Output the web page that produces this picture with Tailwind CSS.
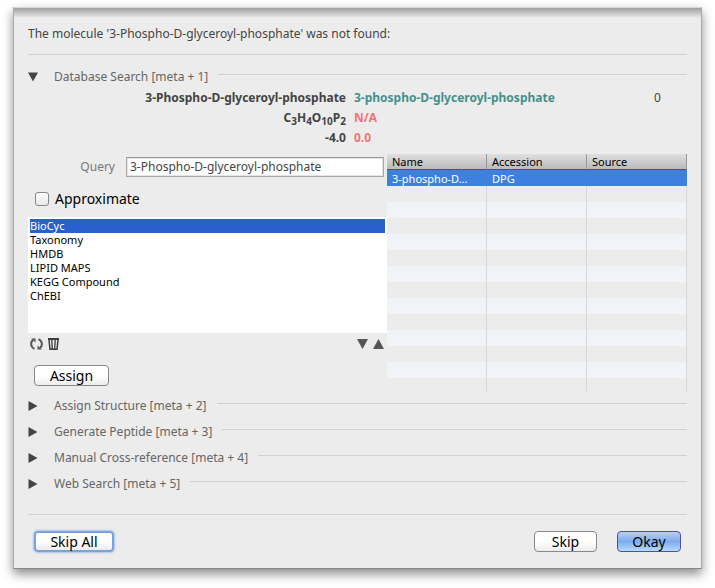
<!DOCTYPE html>
<html lang="en">
<head>
<meta charset="utf-8">
<meta name="viewport" content="width=device-width, initial-scale=1">
<title>Molecule not found</title>
<script src="https://cdn.jsdelivr.net/npm/@tailwindcss/browser@4"></script>
</head>
<body class="bg-white px-[13px] pt-[7px] pb-[19px] font-['Noto_Sans',sans-serif] text-[12px] leading-5 text-[#444]">
<main class="border border-[#aaa] border-t-[#d8d8d8] border-b-[#888] bg-[#ececec] shadow-[0_5px_10px_rgba(0,0,0,0.45)]">
  <div class="h-[10px] bg-linear-to-b from-[#a0a0a0] to-[#ececec]"></div>
  <div class="px-[14px]">
    <p class="pt-[6px] pb-[10px]">The molecule '3-Phospho-D-glyceroyl-phosphate' was not found:</p>
    <hr class="border-[#d0d0d0]">

    <section class="pt-[9px]">
      <h2 class="flex h-[26px] items-center">
        <button type="button" aria-label="Collapse Database Search" class="w-[26px]"><svg class="size-[10px]" viewBox="0 0 10 10"><path d="M0 0.500H10L5 9.500Z" fill="#444"/></svg></button>
        <span class="text-[#666]">Database Search [meta + 1]</span>
        <span class="mb-[5px] ml-[10px] h-px flex-1 bg-[#d0d0d0]"></span>
      </h2>
      <div class="-mt-[2px] grid grid-cols-[318px_1fr_33px] gap-x-2 font-bold">
        <span class="text-right">3-Phospho-D-glyceroyl-phosphate</span><span class="text-[#45908c]">3-phospho-D-glyceroyl-phosphate</span><span class="font-normal">0</span>
        <span class="text-right">C<sub class="text-[10px]">3</sub>H<sub class="text-[10px]">4</sub>O<sub class="text-[10px]">10</sub>P<sub class="text-[10px]">2</sub></span><span class="text-[#f07474]">N/A</span><span></span>
        <span class="text-right">-4.0</span><span class="text-[#f07474]">0.0</span><span></span>
      </div>

      <div class="flex items-start pt-[6px]">
        <div class="min-w-0 flex-1">
          <div class="flex items-center pt-[3px] pr-[3px]">
            <label for="query" class="w-[98px] pr-[11px] text-right text-[#777]">Query</label>
            <input id="query" type="text" value="3-Phospho-D-glyceroyl-phosphate" class="h-5 min-w-0 flex-1 border border-[#a8a8a8] border-t-[#999] bg-white px-[3px] shadow-[inset_0_0_0_1px_#e4e4e4] outline-none">
          </div>
          <label class="flex h-10 items-center gap-[6px] pt-1 pl-[7px] text-[14px] text-black">
            <input type="checkbox" class="size-[14px] appearance-none rounded-[3px] border border-[#888] bg-linear-to-b from-white to-[#e8e8e8]">
            Approximate
          </label>
          <ul class="h-[116px] bg-white px-[2px] pt-[2px] text-[11px] leading-[14px] text-black" role="listbox" aria-label="Databases">
            <li role="option" aria-selected="true" class="bg-[#2a5fce] text-white">BioCyc</li>
            <li role="option">Taxonomy</li>
            <li role="option">HMDB</li>
            <li role="option">LIPID MAPS</li>
            <li role="option">KEGG Compound</li>
            <li role="option">ChEBI</li>
          </ul>
          <div class="flex h-[22px] items-center gap-[5px] pr-[3px] pl-[2px]">
            <button type="button" aria-label="Refresh"><svg class="block h-3 w-[13px]" viewBox="0 0 13 12" fill="none" stroke="#555" stroke-width="2"><path d="M4.500 10.800C0.300 9 0.300 4 3 2.200M8.500 1.200C12.700 3 12.700 8 10 9.800"/><path d="M1 0.500H5.500V4.500ZM12 11.500H7.500V7.500Z" fill="#555" stroke="none"/></svg></button>
            <button type="button" aria-label="Delete"><svg class="block h-3 w-[11px]" viewBox="0 0 11 12" fill="none" stroke="#3c3c3c"><path d="M0 1H11" stroke-width="2"/><path d="M1 2L2 11.300H9L10 2" stroke-width="1.500"/><path d="M3.800 2L4.300 11M7.200 2L6.700 11" stroke-width="1.300"/></svg></button>
            <button type="button" aria-label="Move down" class="ml-auto"><svg class="block h-[10px] w-[11px]" viewBox="0 0 11 10"><path d="M0 0H11L5.500 10Z" fill="#555"/></svg></button>
            <button type="button" aria-label="Move up"><svg class="block h-[10px] w-[11px]" viewBox="0 0 11 10"><path d="M0 10H11L5.500 0Z" fill="#555"/></svg></button>
          </div>
          <div class="pt-[10px] pl-[6px]">
            <button type="button" class="block h-[21px] w-[75px] rounded-[4px] border border-[#888] bg-linear-to-b from-white from-50% to-[#ececec] text-[14px] leading-[19px] text-black">Assign</button>
          </div>
        </div>

        <div class="h-[237px] w-[300px] overflow-hidden">
          <table class="w-full table-fixed border-separate border-spacing-0 text-left text-[11px] leading-[15px] [&_td]:h-4 [&_td]:border-r [&_td]:border-[#d8d8d8] [&_td]:p-0 [&_td]:pl-[5px] [&_th]:h-4 [&_th]:border-r [&_th]:border-b [&_th]:border-r-[#999] [&_th]:border-b-[#555] [&_th]:p-0 [&_th]:pl-[5px] [&_th]:font-normal">
            <thead class="bg-linear-to-b from-[#e0e0e0] to-[#b8b8b8] text-black">
              <tr>
                <th>Name</th>
                <th>Accession</th>
                <th>Source</th>
              </tr>
            </thead>
            <tbody class="[&>tr:nth-child(odd)]:bg-[#f0f3f8]">
              <tr class="!bg-[#3e80e0] text-white [&>td]:!border-[#3e80e0]"><td>3-phospho-D...</td><td>DPG</td><td></td></tr>
              <tr><td></td><td></td><td></td></tr>
              <tr><td></td><td></td><td></td></tr>
              <tr><td></td><td></td><td></td></tr>
              <tr><td></td><td></td><td></td></tr>
              <tr><td></td><td></td><td></td></tr>
              <tr><td></td><td></td><td></td></tr>
              <tr><td></td><td></td><td></td></tr>
              <tr><td></td><td></td><td></td></tr>
              <tr><td></td><td></td><td></td></tr>
              <tr><td></td><td></td><td></td></tr>
              <tr><td></td><td></td><td></td></tr>
              <tr><td></td><td></td><td></td></tr>
              <tr><td></td><td></td><td></td></tr>
            </tbody>
          </table>
        </div>
      </div>
    </section>

    <div class="pt-[2px] text-[#666]">
      <h2 class="flex h-[26px] items-center">
        <button type="button" aria-label="Expand Assign Structure" class="w-[26px]"><svg class="size-[10px]" viewBox="0 0 10 10"><path d="M0.500 0V10L9.500 5Z" fill="#444"/></svg></button>
        <span>Assign Structure [meta + 2]</span>
        <span class="mb-[5px] ml-[10px] h-px flex-1 bg-[#d0d0d0]"></span>
      </h2>
      <h2 class="flex h-[26px] items-center">
        <button type="button" aria-label="Expand Generate Peptide" class="w-[26px]"><svg class="size-[10px]" viewBox="0 0 10 10"><path d="M0.500 0V10L9.500 5Z" fill="#444"/></svg></button>
        <span>Generate Peptide [meta + 3]</span>
        <span class="mb-[5px] ml-[10px] h-px flex-1 bg-[#d0d0d0]"></span>
      </h2>
      <h2 class="flex h-[26px] items-center">
        <button type="button" aria-label="Expand Manual Cross-reference" class="w-[26px]"><svg class="size-[10px]" viewBox="0 0 10 10"><path d="M0.500 0V10L9.500 5Z" fill="#444"/></svg></button>
        <span>Manual Cross-reference [meta + 4]</span>
        <span class="mb-[5px] ml-[10px] h-px flex-1 bg-[#d0d0d0]"></span>
      </h2>
      <h2 class="flex h-[26px] items-center">
        <button type="button" aria-label="Expand Web Search" class="w-[26px]"><svg class="size-[10px]" viewBox="0 0 10 10"><path d="M0.500 0V10L9.500 5Z" fill="#444"/></svg></button>
        <span>Web Search [meta + 5]</span>
        <span class="mb-[5px] ml-[10px] h-px flex-1 bg-[#d0d0d0]"></span>
      </h2>
    </div>

    <hr class="mt-[17px] border-[#d0d0d0]">
    <footer class="flex gap-5 pt-4 pr-[6px] pb-4 pl-[6px] text-[14px] leading-[19px] text-black">
      <button type="button" class="mr-auto h-[21px] w-20 rounded-[4px] border-2 border-[#7aa2dc] bg-linear-to-b from-white from-50% to-[#ececec] leading-[17px] shadow-[0_0_2px_1px_#a8c4ec]">Skip All</button>
      <button type="button" class="h-[21px] w-[63px] rounded-[4px] border border-[#888] bg-linear-to-b from-white from-50% to-[#ececec]">Skip</button>
      <button type="button" class="h-[21px] w-16 rounded-[4px] border border-[#5050a0] bg-linear-to-b from-[#bccdf2] via-[#7cacee] to-[#b4dcfc]">Okay</button>
    </footer>
  </div>
</main>
</body>
</html>
